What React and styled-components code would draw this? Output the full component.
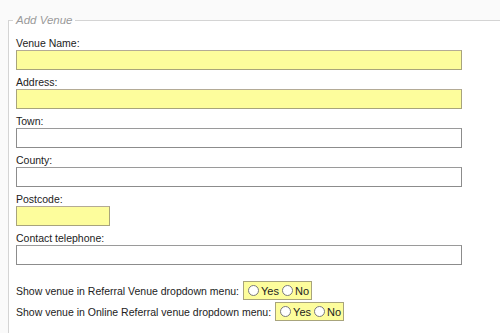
import React from 'react';
import styled, { createGlobalStyle } from 'styled-components';

const GlobalStyle = createGlobalStyle`
  html, body {
    height: 333px;
  }
  body {
    margin: 0;
    background-color: #fafafa;
    font-family: "Liberation Sans", Arial, sans-serif;
    overflow: hidden;
  }
`;

const Fieldset = styled.fieldset`
  margin: 14px -20px 0 8px;
  padding: 11px 0 20px 7px;
  background-color: #ffffff;
  border: 1px solid #d4d4d4;
  border-right: none;
`;

const Legend = styled.legend`
  margin-left: -3px;
  padding: 0 3px;
  font-size: 11.5px;
  font-style: italic;
  color: #9a9a9a;
`;

const Field = styled.div`
  display: flex;
  flex-direction: column;
  margin-bottom: 6px;
`;

const Label = styled.label`
  font-size: 10.5px;
  color: #222;
  line-height: 13px;
`;

const TextInput = styled.input`
  box-sizing: border-box;
  width: ${props => props.width || '446px'};
  height: 20px;
  margin: 0;
  padding: 0 3px;
  background-color: ${props => props.required ? '#fdfd9c' : '#ffffff'};
  border: 1px solid ${props => props.required ? '#a8a47c' : '#8c8c8c'};
  border-top-color: ${props => props.required ? '#b4ab95' : '#9a9a9a'};
  font: inherit;
  font-size: 11px;
`;

const Options = styled.div`
  display: flex;
  flex-direction: column;
  gap: 2px;
  margin-top: 16px;
`;

const OptionRow = styled.div`
  display: flex;
  align-items: center;
  gap: 4px;
  font-size: 10.5px;
  color: #222;
`;

const RadioBox = styled.span`
  display: inline-flex;
  align-items: center;
  gap: 2px;
  height: 19px;
  box-sizing: border-box;
  padding: 0 2px 0 3px;
  background-color: #fdfd9c;
  border: 1px solid #a8a47c;
`;

const Choice = styled.label`
  display: inline-flex;
  align-items: center;
  font-size: 11px;
  color: #222;
`;

const Radio = styled.input`
  appearance: none;
  width: 11px;
  height: 11px;
  margin: 0 2px 0 1px;
  border: 1px solid #7a7a7a;
  border-radius: 50%;
  background: #fff;
`;

const fields = [
  { label: 'Venue Name:', required: true },
  { label: 'Address:', required: true },
  { label: 'Town:' },
  { label: 'County:' },
  { label: 'Postcode:', required: true, width: '94px' },
  { label: 'Contact telephone:' },
];

const YesNo = ({ name }) => (
  <RadioBox>
    <Choice><Radio type="radio" name={name} />Yes</Choice>
    <Choice><Radio type="radio" name={name} />No</Choice>
  </RadioBox>
);

const App = () => (
  <>
    <GlobalStyle />
    <Fieldset>
      <Legend>Add Venue</Legend>
      {fields.map(f => (
        <Field key={f.label}>
          <Label>{f.label}</Label>
          <TextInput required={f.required} width={f.width} />
        </Field>
      ))}
      <Options>
        <OptionRow>
          Show venue in Referral Venue dropdown menu:
          <YesNo name="referral" />
        </OptionRow>
        <OptionRow>
          Show venue in Online Referral venue dropdown menu:
          <YesNo name="online" />
        </OptionRow>
      </Options>
    </Fieldset>
  </>
);

export default App;
